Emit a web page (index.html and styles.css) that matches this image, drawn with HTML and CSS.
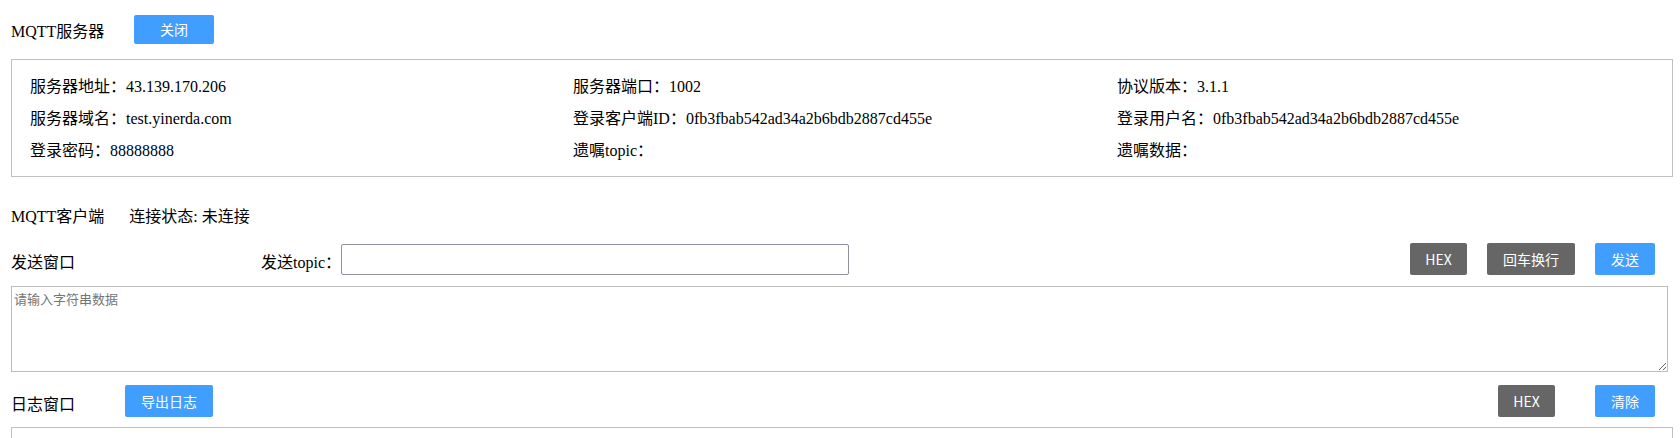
FILE: index.html
```html
<!DOCTYPE html>
<html lang="zh-CN">
<head>
<meta charset="utf-8">
<title>MQTT</title>
<link rel="stylesheet" href="styles.css">
</head>
<body>
<div class="page">
  <div class="head-row">
    <span class="title server-title">MQTT服务器</span>
    <button class="btn btn-blue btn-close">关闭</button>
  </div>

  <div class="info-box">
    <div class="info-grid">
      <div class="info-item">服务器地址：43.139.170.206</div>
      <div class="info-item">服务器端口：1002</div>
      <div class="info-item">协议版本：3.1.1</div>
      <div class="info-item">服务器域名：test.yinerda.com</div>
      <div class="info-item">登录客户端ID：0fb3fbab542ad34a2b6bdb2887cd455e</div>
      <div class="info-item">登录用户名：0fb3fbab542ad34a2b6bdb2887cd455e</div>
      <div class="info-item">登录密码：88888888</div>
      <div class="info-item">遗嘱topic：</div>
      <div class="info-item">遗嘱数据：</div>
    </div>
  </div>

  <div class="status-row">
    <span class="title">MQTT客户端</span>
    <span class="status">连接状态: 未连接</span>
  </div>

  <div class="tool-row send-row">
    <span class="title row-title send-title">发送窗口</span>
    <label class="topic-label" for="topic">发送topic：</label>
    <input id="topic" class="topic-input" type="text">
    <div class="spacer"></div>
    <button class="btn btn-gray btn-hex">HEX</button>
    <button class="btn btn-gray gap-left">回车换行</button>
    <button class="btn btn-blue gap-left">发送</button>
  </div>

  <textarea class="send-area" placeholder="请输入字符串数据"></textarea>

  <div class="tool-row log-row">
    <span class="title row-title log-title">日志窗口</span>
    <button class="btn btn-blue">导出日志</button>
    <div class="spacer"></div>
    <button class="btn btn-gray btn-hex">HEX</button>
    <button class="btn btn-blue gap-wide">清除</button>
  </div>

  <div class="log-box"></div>
</div>
</body>
</html>
```

FILE: styles.css
```css
* {
  box-sizing: border-box;
}

html, body {
  margin: 0;
  background: #ffffff;
}

body {
  font-family: "Liberation Serif", "Noto Sans CJK SC", serif;
  font-size: 16px;
  color: #000000;
}

.page {
  padding: 15px 7px 0 11px;
}

.head-row {
  display: flex;
  align-items: center;
  height: 29px;
}

.server-title {
  width: 123px;
}

.title {
  white-space: nowrap;
}

.btn {
  font-family: "Noto Sans CJK SC", sans-serif;
  font-size: 14px;
  color: #ffffff;
  border: none;
  border-radius: 2px;
  height: 32px;
  padding: 0 16px;
  line-height: 32px;
  cursor: pointer;
  white-space: nowrap;
}

.btn-blue {
  background: #409eff;
}

.btn-gray {
  background: #666666;
}

.btn-close {
  width: 80px;
  height: 29px;
  line-height: 29px;
  padding: 0;
}

.btn-hex {
  width: 57px;
  padding: 0;
}

.gap-left {
  margin-left: 20px;
}

.gap-wide {
  margin-left: 40px;
}

.info-box {
  margin-top: 15px;
  border: 1px solid #c0c0c0;
  padding: 9px 18px 11px 18px;
}

.info-grid {
  display: grid;
  grid-template-columns: 543px 544px 1fr;
  grid-auto-rows: 32px;
  align-items: center;
}

.info-item {
  white-space: nowrap;
}

.status-row {
  margin-top: 22px;
  display: flex;
  align-items: center;
  height: 32px;
}

.status {
  margin-left: 25px;
}

.tool-row {
  display: flex;
  align-items: center;
  height: 32px;
  padding-right: 18px;
}

.send-row {
  margin-top: 12px;
}

.log-row {
  margin-top: 13px;
}

.row-title {
  padding-top: 4px;
}

.send-title {
  width: 250px;
}

.log-title {
  width: 114px;
}

.topic-label {
  white-space: nowrap;
  padding-top: 4px;
}

.topic-input {
  width: 508px;
  height: 31px;
  border: 1px solid #8f8f9d;
  border-radius: 2px;
  padding: 1px 4px;
  font-size: 14px;
  background: #ffffff;
}

.spacer {
  flex: 1;
}

.send-area {
  display: block;
  margin-top: 11px;
  width: 1657px;
  height: 86px;
  border: 1px solid #bdbdbd;
  padding: 2px;
  font-family: "Noto Sans CJK SC", sans-serif;
  font-size: 13px;
  line-height: normal;
  resize: vertical;
}

.send-area::placeholder {
  color: #757575;
}

.log-box {
  margin-top: 10px;
  border: 1px solid #c0c0c0;
  height: 120px;
}
```
